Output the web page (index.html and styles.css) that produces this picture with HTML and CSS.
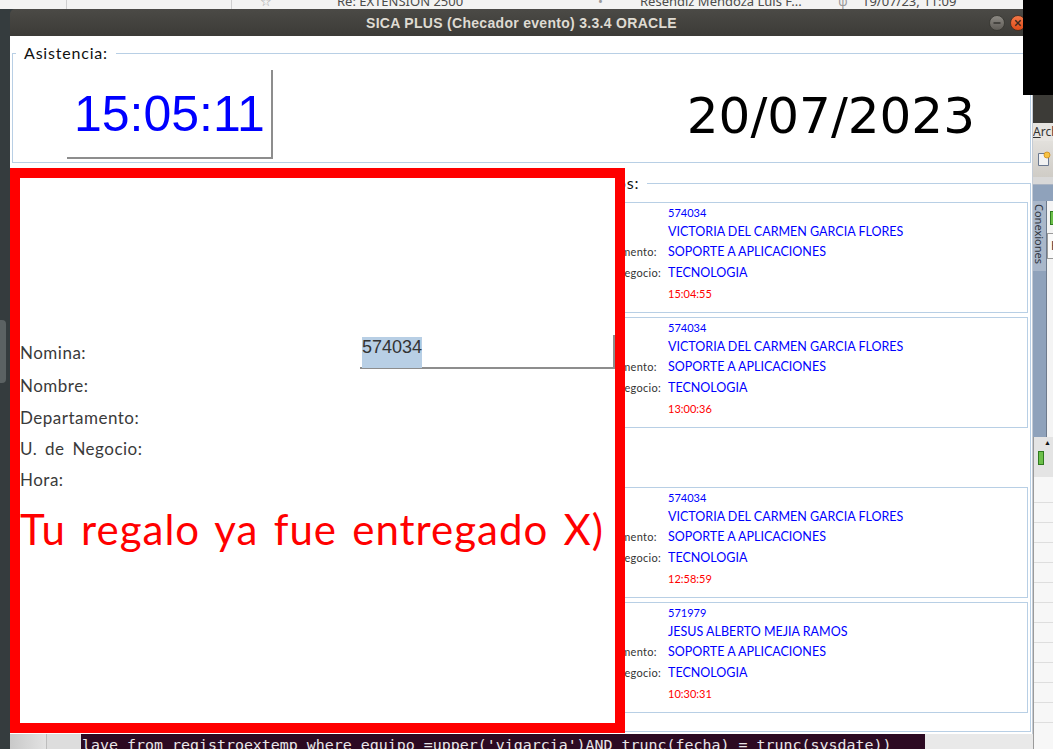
FILE: index.html
```html
<!DOCTYPE html>
<html lang="es">
<head>
<meta charset="utf-8">
<title>SICA PLUS (Checador evento) 3.3.4 ORACLE</title>
<link rel="stylesheet" href="styles.css">
</head>
<body>
<div class="desktop">

  <div class="mail-strip">
    <div class="mc c0"></div>
    <div class="mc c1"></div>
    <div class="mc c2"><span class="star">☆</span></div>
    <div class="mc c3">Re: EXTENSION 2500</div>
    <div class="mc c4"><span class="dot">•</span></div>
    <div class="mc c5">Resendiz Mendoza Luis F...</div>
    <div class="mc c6"><span class="dot">ψ</span></div>
    <div class="mc c7">19/07/23, 11:09</div>
  </div>

  <div class="side-thumb"></div>

  <div class="sqldev">
    <div class="sd-title"></div>
    <div class="sd-menu"><span class="sd-u">A</span>rch</div>
    <div class="sd-tool">
      <svg class="sd-icon" width="14" height="16" viewBox="0 0 14 16"><path d="M1.5 2.5h7l3 3v9h-10z" fill="#f2f2f2" stroke="#6a7890"/><circle cx="10" cy="4" r="3" fill="#f6c343" stroke="#d08a1a" stroke-width="0.8"/></svg>
    </div>
    <div class="sd-band"></div>
    <div class="sd-blue">
      <div class="sd-tab">Conexiones</div>
      <div class="sd-panel">
        <div class="sd-green"></div>
        <div class="sd-head">H</div>
      </div>
    </div>
    <div class="sd-mid">
      <div class="sd-arrow">▲</div>
      <div class="sd-green2"></div>
    </div>
    <div class="sd-grid">
      <div class="sd-line"></div><div class="sd-line"></div><div class="sd-line"></div><div class="sd-line"></div><div class="sd-line"></div><div class="sd-line"></div><div class="sd-line"></div><div class="sd-line"></div><div class="sd-line"></div><div class="sd-line"></div><div class="sd-line"></div><div class="sd-line"></div>
    </div>
  </div>

  <div class="bottom-strip">
    <div class="bs-a"></div>
    <div class="bs-b"></div>
    <div class="terminal"><span class="term-text">lave from registroextemp where equipo =upper('vigarcia')AND trunc(fecha) = trunc(sysdate))</span></div>
    <div class="bs-c"></div>
  </div>

  <div class="window">
    <div class="titlebar">
      <span></span>
      <span class="title">SICA PLUS (Checador evento) 3.3.4 ORACLE</span>
      <span class="wbtns">
        <svg class="wbtn" width="16" height="16" viewBox="0 0 16 16"><defs><linearGradient id="gmin" x1="0" y1="0" x2="0" y2="1"><stop offset="0" stop-color="#8e8b85"/><stop offset="1" stop-color="#5d5a55"/></linearGradient></defs><circle cx="8" cy="8" r="7.5" fill="url(#gmin)" stroke="#34332f" stroke-width="0.8"/><rect x="4.5" y="7.2" width="7" height="1.6" fill="#3a3935"/></svg>
        <svg class="wbtn" width="16" height="16" viewBox="0 0 16 16"><defs><linearGradient id="gcl" x1="0" y1="0" x2="0" y2="1"><stop offset="0" stop-color="#f47a4a"/><stop offset="1" stop-color="#de4a17"/></linearGradient></defs><circle cx="8" cy="8" r="7.5" fill="url(#gcl)" stroke="#3a2a20" stroke-width="0.8"/><path d="M5.3 5.3l5.4 5.4M10.7 5.3l-5.4 5.4" stroke="#3a2a20" stroke-width="1.5"/></svg>
      </span>
    </div>
    <div class="content">
      <fieldset class="asis">
        <legend class="lg">Asistencia:</legend>
        <div class="asis-row">
          <div class="clock">15:05:11</div>
          <div class="date">20/07/2023</div>
        </div>
      </fieldset>

      <fieldset class="regs">
        <legend class="lg">Registros:</legend>
        <div class="cards">
          <div class="card">
            <span class="cl">Nomina:</span><span class="cv num">574034</span>
            <span class="cl">Nombre:</span><span class="cv">VICTORIA DEL CARMEN GARCIA FLORES</span>
            <span class="cl">Departamento:</span><span class="cv">SOPORTE A APLICACIONES</span>
            <span class="cl">U. de Negocio:</span><span class="cv">TECNOLOGIA</span>
            <span class="cl">Hora:</span><span class="cv time">15:04:55</span>
          </div>
          <div class="card">
            <span class="cl">Nomina:</span><span class="cv num">574034</span>
            <span class="cl">Nombre:</span><span class="cv">VICTORIA DEL CARMEN GARCIA FLORES</span>
            <span class="cl">Departamento:</span><span class="cv">SOPORTE A APLICACIONES</span>
            <span class="cl">U. de Negocio:</span><span class="cv">TECNOLOGIA</span>
            <span class="cl">Hora:</span><span class="cv time">13:00:36</span>
          </div>
          <div class="card-gap"></div>
          <div class="card">
            <span class="cl">Nomina:</span><span class="cv num">574034</span>
            <span class="cl">Nombre:</span><span class="cv">VICTORIA DEL CARMEN GARCIA FLORES</span>
            <span class="cl">Departamento:</span><span class="cv">SOPORTE A APLICACIONES</span>
            <span class="cl">U. de Negocio:</span><span class="cv">TECNOLOGIA</span>
            <span class="cl">Hora:</span><span class="cv time">12:58:59</span>
          </div>
          <div class="card">
            <span class="cl">Nomina:</span><span class="cv num">571979</span>
            <span class="cl">Nombre:</span><span class="cv">JESUS ALBERTO MEJIA RAMOS</span>
            <span class="cl">Departamento:</span><span class="cv">SOPORTE A APLICACIONES</span>
            <span class="cl">U. de Negocio:</span><span class="cv">TECNOLOGIA</span>
            <span class="cl">Hora:</span><span class="cv time">10:30:31</span>
          </div>
        </div>
      </fieldset>

      <div class="alert">
        <div class="form">
          <span class="fl">Nomina:</span>
          <div class="input"><span class="sel">574034</span></div>
          <span class="fl">Nombre:</span><span></span>
          <span class="fl">Departamento:</span><span></span>
          <span class="fl">U. de Negocio:</span><span></span>
          <span class="fl">Hora:</span><span></span>
        </div>
        <div class="msg">Tu regalo ya fue entregado X)</div>
      </div>
    </div>
  </div>

  <div class="blackbox"></div>
</div>
</body>
</html>
```

FILE: styles.css
```css
* { box-sizing: border-box; }

body {
  margin: 0;
  width: 1053px;
  height: 749px;
  overflow: hidden;
  background: #353c3e;
  font-family: Lato, "Open Sans", sans-serif;
}

.desktop {
  position: relative;
  width: 1053px;
  height: 749px;
}

/* background mail client strip */
.mail-strip {
  position: absolute;
  left: 0;
  top: 0;
  width: 1023px;
  height: 9px;
  background: #f3f3f2;
  overflow: hidden;
  display: flex;
  font: 13px "Noto Sans", "DejaVu Sans", sans-serif;
  color: #4b4b4b;
}
.mc {
  height: 15px;
  line-height: 14px;
  margin-top: -6px;
  white-space: nowrap;
  overflow: hidden;
  flex: none;
}
.c0 { width: 67px; border-right: 1px solid #cfcfcf; }
.c1 { width: 165px; border-right: 1px solid #cfcfcf; }
.c2 { width: 105px; padding-left: 28px; color: #9a9a9a; }
.c3 { width: 261px; }
.c4 { width: 42px; color: #9a9a9a; }
.c5 { width: 198px; }
.c6 { width: 24px; color: #9a9a9a; }
.c7 { width: 161px; }

.side-thumb {
  position: absolute;
  left: 0;
  top: 320px;
  width: 6px;
  height: 63px;
  border-radius: 0 4px 4px 0;
  background: #5b6263;
}

/* SQL developer window at right */
.sqldev {
  position: absolute;
  left: 1033px;
  top: 95px;
  width: 20px;
  height: 654px;
  background: #c9c9c9;
  display: flex;
  flex-direction: column;
  overflow: hidden;
}
.sd-title { height: 28px; background: #3c3b37; flex: none; }
.sd-menu {
  height: 18px;
  flex: none;
  background: #e6e4e0;
  font: 12px "Noto Sans", sans-serif;
  line-height: 18px;
  color: #333;
  white-space: nowrap;
}
.sd-u { text-decoration: underline; }
.sd-tool {
  height: 36px;
  flex: none;
  background: linear-gradient(#e2e0dc, #cfccc6);
  padding: 10px 0 0 4px;
}
.sd-icon { display: block; }
.sd-band { height: 8px; flex: none; background: #d8d8d8; border-bottom: 1px solid #a9b3c2; }
.sd-blue {
  height: 252px;
  flex: none;
  background: #8fa2bb;
  display: flex;
  padding-top: 16px;
}
.sd-tab {
  width: 13px;
  flex: none;
  writing-mode: vertical-rl;
  font: 11px "Noto Sans", sans-serif;
  color: #2f3540;
  background: #a9b7ca;
  height: 70px;
  line-height: 13px;
  padding-top: 3px;
}
.sd-panel {
  flex: 1;
  background: #f4f4f4;
  border-left: 1px solid #6d7a8c;
  padding-top: 10px;
}
.sd-green {
  width: 6px;
  height: 14px;
  margin-left: 3px;
  background: #6cc04a;
  border: 1px solid #2f7a1f;
}
.sd-head {
  margin-top: 8px;
  height: 26px;
  border: 1px solid #9a9a9a;
  background: #fafafa;
  font: 12px "Noto Sans", sans-serif;
  line-height: 24px;
  padding-left: 3px;
  color: #333;
}
.sd-mid {
  height: 40px;
  flex: none;
  background: #e4e4e4;
  border-left: 1px solid #9a9a9a;
  padding-left: 10px;
}
.sd-arrow { font-size: 7px; line-height: 10px; color: #111; }
.sd-green2 {
  width: 6px;
  height: 14px;
  margin-top: 4px;
  margin-left: -6px;
  background: #6cc04a;
  border: 1px solid #2f7a1f;
}
.sd-grid {
  flex: 1;
  background: #f7f7f7;
  border-left: 1px solid #9a9a9a;
  padding-top: 6px;
}
.sd-line { height: 20px; border-bottom: 1px solid #dedede; }

/* strip below the main window */
.bottom-strip {
  position: absolute;
  left: 10px;
  top: 733px;
  width: 1023px;
  height: 16px;
  display: flex;
}
.bs-a { width: 37px; background: linear-gradient(90deg, #c9c9c9, #e2e2e2); border-right: 1px solid #bdbdbd; }
.bs-b { width: 34px; background: #dddddd; }
.terminal {
  width: 844px;
  background: #2c0a22;
  overflow: hidden;
  padding-left: 1px;
}
.term-text {
  display: block;
  font: 14.95px "DejaVu Sans Mono", "Liberation Mono", monospace;
  line-height: 18px;
  margin-top: 3px;
  color: #e9e6e9;
  white-space: nowrap;
}
.bs-c { flex: 1; background: #e9e9e9; }

/* main application window */
.window {
  position: absolute;
  left: 10px;
  top: 9px;
  width: 1023px;
  height: 725px;
  display: flex;
  flex-direction: column;
}
.titlebar {
  height: 27px;
  flex: none;
  background: linear-gradient(#4b4a46, #3c3b37);
  border-radius: 5px 5px 0 0;
  display: grid;
  grid-template-columns: 1fr auto 1fr;
  align-items: center;
}
.title {
  font: bold 14px "Liberation Sans", Arial, sans-serif;
  letter-spacing: 0.3px;
  color: #dfdbd2;
  white-space: nowrap;
}
.wbtns {
  justify-self: end;
  display: flex;
  gap: 5px;
  margin-right: 7px;
}
.wbtn { display: block; }

.content {
  position: relative;
  flex: 1;
  background: #ffffff;
  padding: 0 1px 0 2px;
  border-right: 1px solid #c4ccd6;
}

.lg {
  font-size: 16px;
  letter-spacing: 0.8px;
  line-height: 18px;
  color: #111;
  padding: 0 8px;
  margin-left: 3px;
}

.asis {
  margin: 8px 0 0 0;
  padding: 0 0 3px 0;
  border: 1px solid #b8cfe5;
  min-width: 0;
}
.asis-row {
  display: flex;
  align-items: center;
  padding-top: 8px;
}
.clock {
  width: 206px;
  height: 89px;
  margin-left: 54px;
  border-right: 2px solid #8d8d8d;
  border-bottom: 2px solid #8d8d8d;
  padding-left: 7px;
  display: flex;
  align-items: center;
  font: 50px "Liberation Sans", Arial, sans-serif;
  line-height: 1;
  color: #0000ff;
}
.date {
  margin-left: auto;
  margin-right: 55px;
  margin-top: 2px;
  font: 50px "DejaVu Sans", sans-serif;
  line-height: 1;
  color: #000;
}

.regs {
  margin: 11px 0 0 539px;
  padding: 0 0 18px 0;
  border: 1px solid #b8cfe5;
  min-width: 0;
}
.cards {
  display: flex;
  flex-direction: column;
  gap: 4px;
  padding: 10px 2px 0 3px;
}
.card {
  height: 111px;
  border: 1px solid #b8cfe5;
  display: grid;
  grid-template-columns: 112px 1fr;
  grid-template-rows: 18px 20px 21px 21px 20px;
  align-items: center;
}
.card-gap { height: 51px; }
.cl {
  padding-left: 24px;
  font-size: 11px;
  letter-spacing: 0.3px;
  word-spacing: 3px;
  color: #333;
  white-space: nowrap;
  overflow: hidden;
}
.cv {
  font-size: 12.5px;
  color: #0000ff;
  white-space: nowrap;
}
.cv.num { font-size: 11px; }
.cv.time { font-size: 11px; color: #ff0000; }

/* red alert panel overlaying the form */
.alert {
  position: absolute;
  left: 0;
  top: 132px;
  width: 615px;
  height: 565px;
  border: 10px solid #ff0000;
  background: #ffffff;
  padding-top: 157px;
}
.form {
  display: grid;
  grid-template-columns: 340px 1fr;
  grid-template-rows: 34px 32px 32px 31px 31px;
  align-items: center;
}
.fl {
  font-size: 17px;
  letter-spacing: 0.5px;
  word-spacing: 3px;
  color: #3a3a3a;
  white-space: nowrap;
}
.input {
  height: 34px;
  border-right: 2px solid #8d8d8d;
  border-bottom: 2px solid #8d8d8d;
  padding: 2px 0 0 2px;
}
.sel {
  display: inline-block;
  height: 31px;
  line-height: 31px;
  background: #b8cfe5;
  font: 18px "Liberation Sans", Arial, sans-serif;
  color: #333;
}
.msg {
  margin-top: 9px;
  font-size: 42px;
  font-weight: 400;
  letter-spacing: 1px;
  word-spacing: 3.5px;
  line-height: 50px;
  color: #ff0000;
  white-space: nowrap;
}

.blackbox {
  position: absolute;
  left: 1023px;
  top: 0;
  width: 30px;
  height: 95px;
  background: #000;
}
```
